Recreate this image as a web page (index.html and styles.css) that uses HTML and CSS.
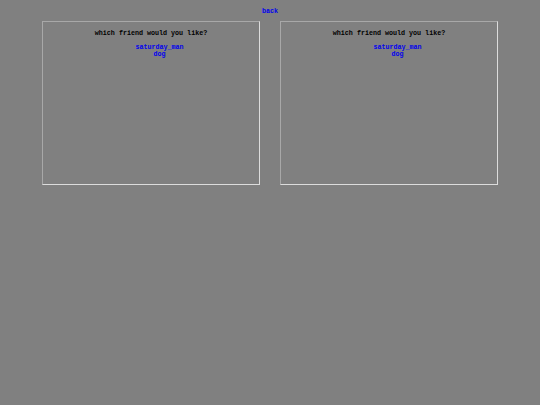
FILE: index.html
```html
<!DOCTYPE html>
<html>
<head>
<meta charset="utf-8">
<link rel="stylesheet" href="styles.css">
</head>
<body>
<div class="top"><a href="#" class="link">back</a></div>
<div class="panes">
  <div class="pane">
    <div class="title">which friend would you like?</div>
    <div class="list">
      <a href="#" class="link">saturday_man</a>
      <a href="#" class="link">dog</a>
    </div>
  </div>
  <div class="pane">
    <div class="title">which friend would you like?</div>
    <div class="list">
      <a href="#" class="link">saturday_man</a>
      <a href="#" class="link">dog</a>
    </div>
  </div>
</div>
</body>
</html>
```
FILE: styles.css
```css
html, body {
  margin: 0;
  padding: 0;
  background: #808080;
}
body {
  font-family: "Liberation Mono", "Courier New", monospace;
  font-size: 6.7px;
  font-weight: bold;
  line-height: 7.5px;
  color: #000;
}
.top {
  text-align: center;
  padding-top: 8px;
  height: 13px;
}
.link {
  color: #0000ee;
  text-decoration: none;
}
.panes {
  display: flex;
  justify-content: center;
  gap: 20px;
}
.pane {
  box-sizing: border-box;
  width: 218px;
  height: 164px;
  border-style: solid;
  border-width: 1px;
  border-color: #a8a8a8 #dcdcdc #dcdcdc #a8a8a8;
  text-align: center;
  padding-top: 8px;
}
.list {
  margin-top: 6px;
  padding-left: 17px;
  display: flex;
  flex-direction: column;
  align-items: center;
}
```
